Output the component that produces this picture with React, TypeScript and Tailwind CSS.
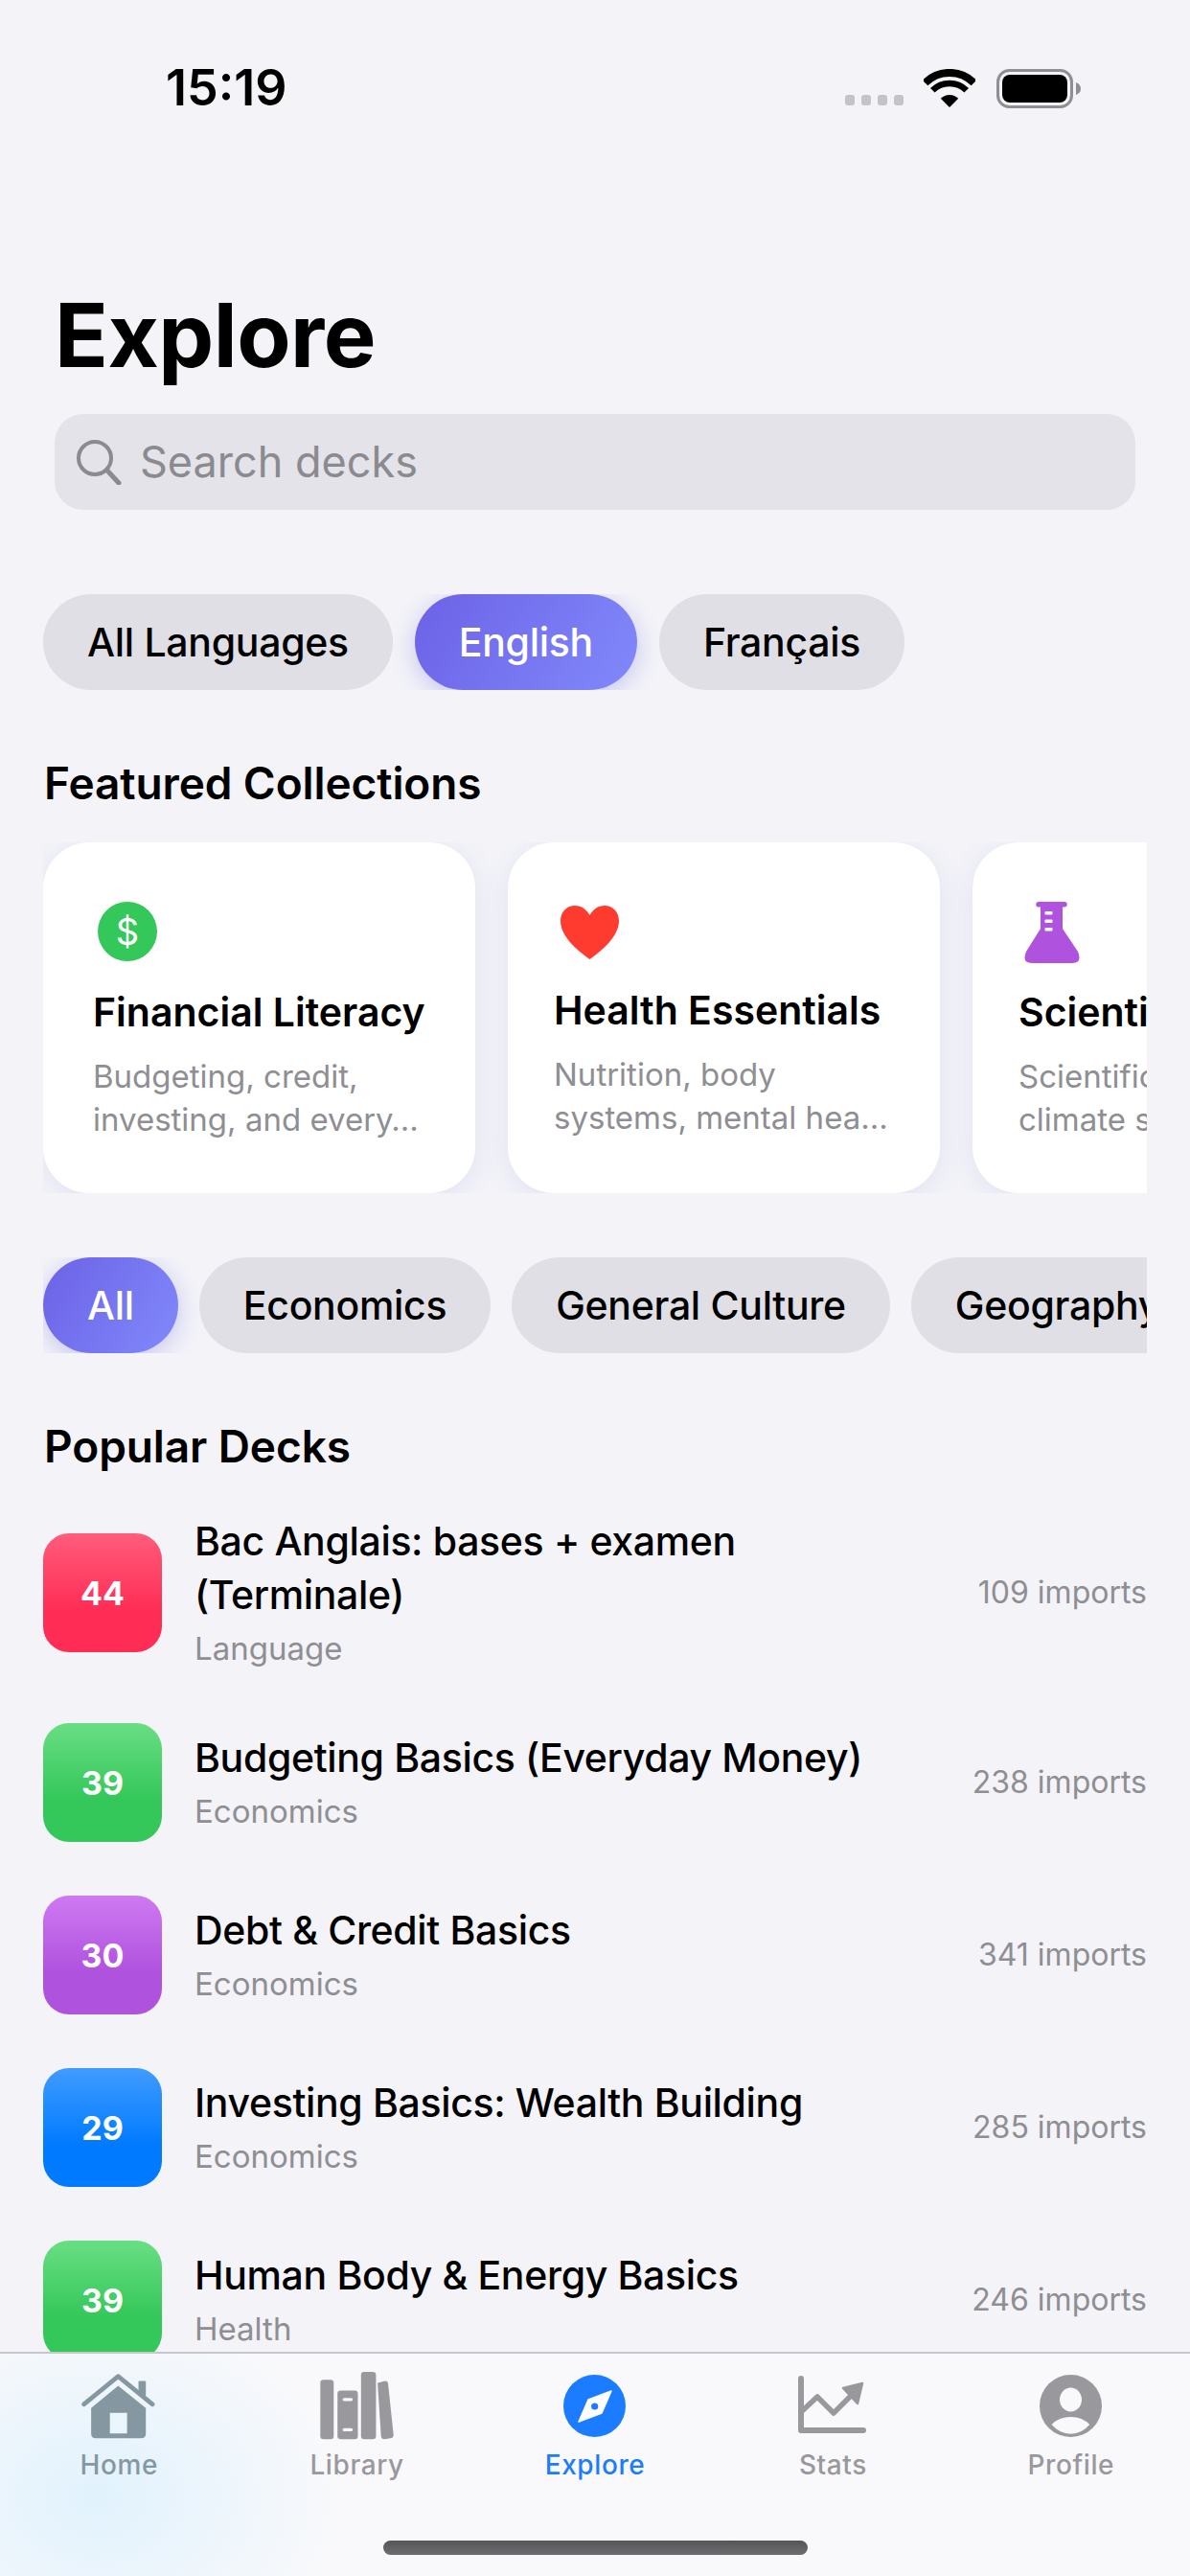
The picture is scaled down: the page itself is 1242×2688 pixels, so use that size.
const languages = [
  { label: "All Languages", active: false },
  { label: "English", active: true },
  { label: "Français", active: false },
];

const categories = [
  { label: "All", active: true },
  { label: "Economics", active: false },
  { label: "General Culture", active: false },
  { label: "Geography", active: false },
];

const decks = [
  { count: 44, title: "Bac Anglais: bases + examen (Terminale)", category: "Language", imports: 109, tone: "bg-[linear-gradient(180deg,#ff5c7c_0%,#ff2d55_65%)]" },
  { count: 39, title: "Budgeting Basics (Everyday Money)", category: "Economics", imports: 238, tone: "bg-[linear-gradient(180deg,#69de84_0%,#34c759_65%)]" },
  { count: 30, title: "Debt & Credit Basics", category: "Economics", imports: 341, tone: "bg-[linear-gradient(180deg,#cf79f2_0%,#af52de_65%)]" },
  { count: 29, title: "Investing Basics: Wealth Building", category: "Economics", imports: 285, tone: "bg-[linear-gradient(180deg,#409cff_0%,#007aff_65%)]" },
  { count: 39, title: "Human Body & Energy Basics", category: "Health", imports: 246, tone: "bg-[linear-gradient(180deg,#69de84_0%,#34c759_65%)]" },
];

function Pill({ label, active }: { label: string; active: boolean }) {
  return (
    <div
      className={
        active
          ? "flex h-[100px] shrink-0 items-center rounded-[50px] bg-[linear-gradient(120deg,#6c62e6_0%,#8189fb_100%)] px-[46px] pt-[2px] text-[41px] font-medium tracking-[-0.3px] text-white shadow-[0_6px_24px_rgba(94,92,230,0.3)]"
          : "flex h-[100px] shrink-0 items-center rounded-[50px] bg-[#dfdfe5] px-[46px] pt-[2px] text-[41px] font-medium tracking-[-0.3px] text-black"
      }
    >
      {label}
    </div>
  );
}

function DollarIcon() {
  return (
    <div className="flex h-[62px] w-[62px] items-center justify-center rounded-full bg-[#34c759] text-[38px] leading-none text-white">
      $
    </div>
  );
}

function HeartIcon() {
  return (
    <svg width="61" height="56" viewBox="0 0 61 56" className="mt-[4px]">
      <path
        fill="#ff3b30"
        d="M30.5 56C28 54 0 36 0 16C0 6 7 0 15 0C22 0 27 4 30.5 10C34 4 39 0 46 0C54 0 61 6 61 16C61 36 33 54 30.5 56Z"
      />
    </svg>
  );
}

function FlaskIcon() {
  return (
    <svg width="60" height="64" viewBox="0 0 60 64">
      <path
        fill="#af52de"
        d="M16 0H43a2.7 2.7 0 0 1 0 5.5H41V28L57 52Q62 64 51 64H9Q-2 64 3 52L18 28V5.5H16a2.7 2.7 0 0 1 0-5.5Z"
      />
      <rect x="22.5" y="10" width="8" height="3.6" rx="1" fill="#fff" />
      <rect x="22.5" y="18.5" width="8" height="3.6" rx="1" fill="#fff" />
      <rect x="22.5" y="27" width="8" height="3.6" rx="1" fill="#fff" />
    </svg>
  );
}

function CollectionCard({
  icon,
  title,
  lines,
  inset,
  iconBox,
}: {
  icon: React.ReactNode;
  title: string;
  lines: string[];
  inset: string;
  iconBox: string;
}) {
  return (
    <div className={`h-[366px] w-[451px] shrink-0 rounded-[48px] bg-white pt-[62px] shadow-[0_6px_30px_rgba(88,86,214,0.1)] ${inset}`}>
      <div className={iconBox}>{icon}</div>
      <div className="mt-[23px] whitespace-nowrap text-[41px] leading-[50px] font-semibold text-black">{title}</div>
      <div className="mt-[20px] text-[33px] leading-[45px] whitespace-nowrap text-[#8e8e93]">
        {lines.map((line) => (
          <div key={line}>{line}</div>
        ))}
      </div>
    </div>
  );
}

function DeckRow({ deck }: { deck: (typeof decks)[number] }) {
  return (
    <div className="flex items-center">
      <div className={`flex h-[124px] w-[124px] shrink-0 items-center justify-center rounded-[27px] text-[34px] font-bold text-white ${deck.tone}`}>
        {deck.count}
      </div>
      <div className="mb-[2px] -mt-[2px] ml-[34px] min-w-0 flex-1">
        <div className="max-w-[740px] text-[41px] leading-[56px] font-medium tracking-[-0.35px] text-black">{deck.title}</div>
        <div className="mt-[4px] -mb-[4px] text-[33px] leading-[48px] text-[#8e8e93]">{deck.category}</div>
      </div>
      <div className="shrink-0 text-[32px] text-[#8e8e93]">{deck.imports} imports</div>
    </div>
  );
}

function HomeIcon() {
  return (
    <svg width="80" height="73" viewBox="70 90 240 220" fill="#8598a2">
      <path d="M80 195L188 107L296 195" fill="none" stroke="#8598a2" strokeWidth="14" strokeLinecap="round" strokeLinejoin="round" />
      <rect x="252" y="122" width="23" height="46" rx="2" />
      <path
        fillRule="evenodd"
        d="M188 137L275 207V287Q275 302 260 302H118Q103 302 103 287V207ZM162 222V287H216V222Z"
      />
    </svg>
  );
}

function LibraryIcon() {
  return (
    <svg width="83" height="77" viewBox="810 85 250 230" fill="#98989d">
      <rect x="820" y="118" width="42" height="187" rx="10" />
      <rect x="874" y="152" width="64" height="153" rx="10" />
      <rect x="890" y="175" width="32" height="10" rx="5" fill="#f8f8fa" />
      <rect x="890" y="270" width="32" height="10" rx="5" fill="#f8f8fa" />
      <rect x="948" y="93" width="47" height="212" rx="10" />
      <path d="M1000 128L1024 122Q1032 122 1033 130L1050 290Q1051 300 1040 302L1022 305Q1012 305 1011 296Z" />
    </svg>
  );
}

function CompassIcon() {
  return (
    <svg width="65" height="65" viewBox="0 0 65 65">
      <circle cx="32.5" cy="32.5" r="32.5" fill="#1c7cff" />
      <path fill="#fff" stroke="#fff" strokeWidth="1.5" strokeLinejoin="round" d="M50 17L40 40L16 49L26 26Z" />
      <circle cx="32.7" cy="33" r="3.6" fill="#1c7cff" />
    </svg>
  );
}

function StatsIcon() {
  return (
    <svg width="72" height="62" viewBox="0 0 72 62" fill="none" stroke="#98989d" strokeLinecap="round" strokeLinejoin="round">
      <path d="M3 3V57H68" strokeWidth="6" />
      <path d="M4 37L20 22L37 39L54 22" strokeWidth="5.5" />
      <path d="M67 8L47 13L62 29Z" fill="#98989d" strokeWidth="2.5" />
    </svg>
  );
}

function ProfileIcon() {
  return (
    <svg width="65" height="65" viewBox="0 0 65 65">
      <circle cx="32.5" cy="32.5" r="32.5" fill="#98989d" />
      <ellipse cx="32.5" cy="26" rx="11.5" ry="12.5" fill="#f9f9fb" />
      <path d="M12.6 52Q20 44 32.5 44T52.2 52Q44 61.7 32.5 61.7T12.6 52Z" fill="#f9f9fb" />
    </svg>
  );
}

const tabs = [
  { label: "Home", icon: <HomeIcon />, color: "text-[#8598a2]" },
  { label: "Library", icon: <LibraryIcon />, color: "text-[#98989d]" },
  { label: "Explore", icon: <CompassIcon />, color: "text-[#1c7cff]" },
  { label: "Stats", icon: <StatsIcon />, color: "text-[#98989d]" },
  { label: "Profile", icon: <ProfileIcon />, color: "text-[#98989d]" },
];

export default function App() {
  return (
    <div className="flex h-[2688px] w-[1242px] flex-col overflow-hidden bg-[#f3f3f8] font-['Inter',sans-serif]">
      <div className="flex h-[184px] shrink-0 items-center justify-between pr-[114px] pl-[173px]">
        <div className="text-[52px] font-semibold text-black">15:19</div>
        <div className="flex items-center">
          <div className="mt-[25px] mr-[21px] flex gap-[7px]">
            <span className="h-[11px] w-[10px] rounded-[3px] bg-[#c4c4c8]" />
            <span className="h-[11px] w-[10px] rounded-[3px] bg-[#c4c4c8]" />
            <span className="h-[11px] w-[10px] rounded-[3px] bg-[#c4c4c8]" />
            <span className="h-[11px] w-[10px] rounded-[3px] bg-[#c4c4c8]" />
          </div>
          <svg width="54" height="40" viewBox="0 0 54 40" fill="none" stroke="#000" className="mr-[22px]">
            <path d="M1.5 14.5A36 36 0 0 1 52.5 14.5" strokeWidth="8" />
            <path d="M9.3 22.3A25 25 0 0 1 44.7 22.3" strokeWidth="6.5" />
            <path d="M27 40L17.8 30.8A13 13 0 0 1 36.2 30.8Z" fill="#000" stroke="none" />
          </svg>
          <svg width="88" height="41" viewBox="0 0 88 41">
            <rect x="1.5" y="1.5" width="77" height="38" rx="12" fill="none" stroke="#8e8e93" strokeWidth="3" />
            <rect x="6" y="6" width="68" height="29" rx="8" fill="#000" />
            <path d="M83 14Q88 16 88 20.5T83 27Z" fill="#8e8e93" />
          </svg>
        </div>
      </div>

      <div className="min-h-0 flex-1 overflow-hidden">
        <h1 className="mt-[111px] pl-[57px] text-[92px] leading-[110px] font-bold tracking-[-0.5px] text-black">Explore</h1>

        <div className="mx-[57px] mt-[27px] flex h-[100px] items-center rounded-[30px] bg-[#e3e3e9] pl-[22px]">
          <svg width="48" height="48" viewBox="0 0 48 48" fill="none" stroke="#8a8a8f" strokeLinecap="round">
            <circle cx="20" cy="20" r="17" strokeWidth="4" />
            <path d="M32.5 32.5L45 46" strokeWidth="5" />
          </svg>
          <span className="ml-[19px] text-[45px] text-[#8a8a8f]">Search decks</span>
        </div>

        <div className="mx-[45px] mt-[88px] flex gap-[23px] overflow-hidden">
          {languages.map((item) => (
            <Pill key={item.label} {...item} />
          ))}
        </div>

        <h2 className="mt-[68px] pl-[46px] text-[46px] leading-[58px] font-semibold tracking-[-0.1px] text-black">Featured Collections</h2>

        <div className="mx-[45px] mt-[33px] flex gap-[34px] overflow-hidden">
          <CollectionCard
            icon={<DollarIcon />}
            title="Financial Literacy"
            lines={["Budgeting, credit,", "investing, and every…"]}
            inset="pl-[52px]"
            iconBox="ml-[5px] h-[67px]"
          />
          <CollectionCard
            icon={<HeartIcon />}
            title="Health Essentials"
            lines={["Nutrition, body", "systems, mental hea…"]}
            inset="pl-[48px]"
            iconBox="ml-[7px] h-[61px]"
          />
          <CollectionCard
            icon={<FlaskIcon />}
            title="Scientific Literacy"
            lines={["Scientific method,", "climate science…"]}
            inset="pl-[48px]"
            iconBox="ml-[5px] h-[67px]"
          />
        </div>

        <div className="mx-[45px] mt-[67px] flex gap-[22px] overflow-hidden">
          {categories.map((item) => (
            <Pill key={item.label} {...item} />
          ))}
        </div>

        <h2 className="mt-[68px] pl-[46px] text-[46px] leading-[58px] font-semibold tracking-[-0.1px] text-black">Popular Decks</h2>

        <div className="mx-[45px] mt-[44px] flex flex-col gap-[56px]">
          {decks.map((deck) => (
            <DeckRow key={deck.title} deck={deck} />
          ))}
        </div>
      </div>

      <div className="relative h-[234px] shrink-0 border-t-[2px] border-[#c6c6cb] bg-[#f9f9fb] bg-[radial-gradient(ellipse_260px_200px_at_100px_150px,#e1f2fd_0%,#f9f9fb_100%)]">
        <div className="grid grid-cols-5 pt-[16px]">
          {tabs.map((tab) => (
            <div key={tab.label} className={`flex flex-col items-center ${tab.color}`}>
              <div className="flex h-[76px] items-center justify-center">{tab.icon}</div>
              <div className="mt-[6px] text-[28px] leading-[36px] font-medium tracking-[0.6px]">{tab.label}</div>
            </div>
          ))}
        </div>
        <div className="absolute bottom-[22px] left-[400px] h-[15px] w-[443px] rounded-full bg-[linear-gradient(180deg,#555558,#6e6e72)]" />
      </div>
    </div>
  );
}
